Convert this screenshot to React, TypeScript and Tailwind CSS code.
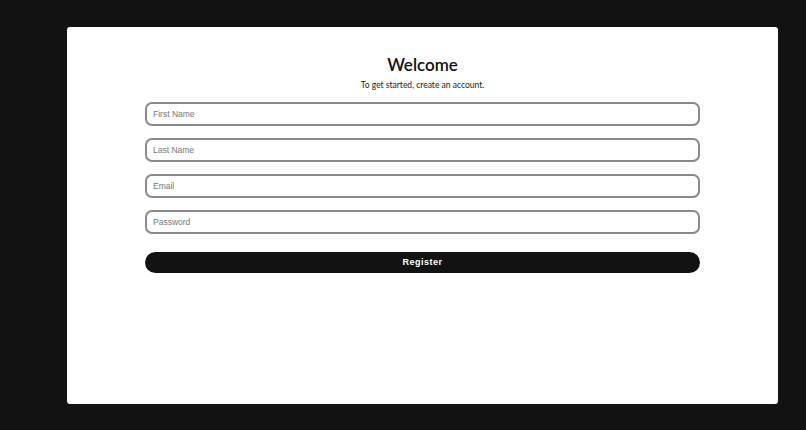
export default function App() {
  const fields = ["First Name", "Last Name", "Email", "Password"];

  return (
    <div className="min-h-screen w-full bg-[#121212] pt-[27px] pl-[67px]">
      <div className="w-[711px] h-[377px] bg-white rounded-[3px] px-[78px] pt-[27px]">
        <h1
          className="text-center text-[17px] font-semibold text-[#111] leading-[22px]"
          style={{ fontFamily: "Lato, 'Noto Sans', sans-serif" }}
        >
          Welcome
        </h1>
        <p
          className="text-center text-[8.5px] text-[#222] mt-[3px] leading-[12px]"
          style={{ fontFamily: "Lato, 'Noto Sans', sans-serif" }}
        >
          To get started, create an account.
        </p>

        <form className="mt-[11px] flex flex-col" onSubmit={(e) => e.preventDefault()}>
          <div className="flex flex-col gap-[12px]">
            {fields.map((f) => (
              <input
                key={f}
                type={f === "Password" ? "password" : f === "Email" ? "email" : "text"}
                placeholder={f}
                className="h-[24px] w-full rounded-[7px] border-2 border-[#8a8a8a] px-[6px] text-[8.5px] text-[#333] placeholder:text-[#777] outline-none"
                style={{ fontFamily: "'Liberation Sans', Arial, sans-serif" }}
              />
            ))}
          </div>
          <button
            type="submit"
            className="mt-[18px] h-[21px] w-full rounded-full bg-[#121212] text-white text-[9px] font-bold tracking-[0.5px]"
            style={{ fontFamily: "'Liberation Sans', Arial, sans-serif" }}
          >
            Register
          </button>
        </form>
      </div>
    </div>
  );
}
